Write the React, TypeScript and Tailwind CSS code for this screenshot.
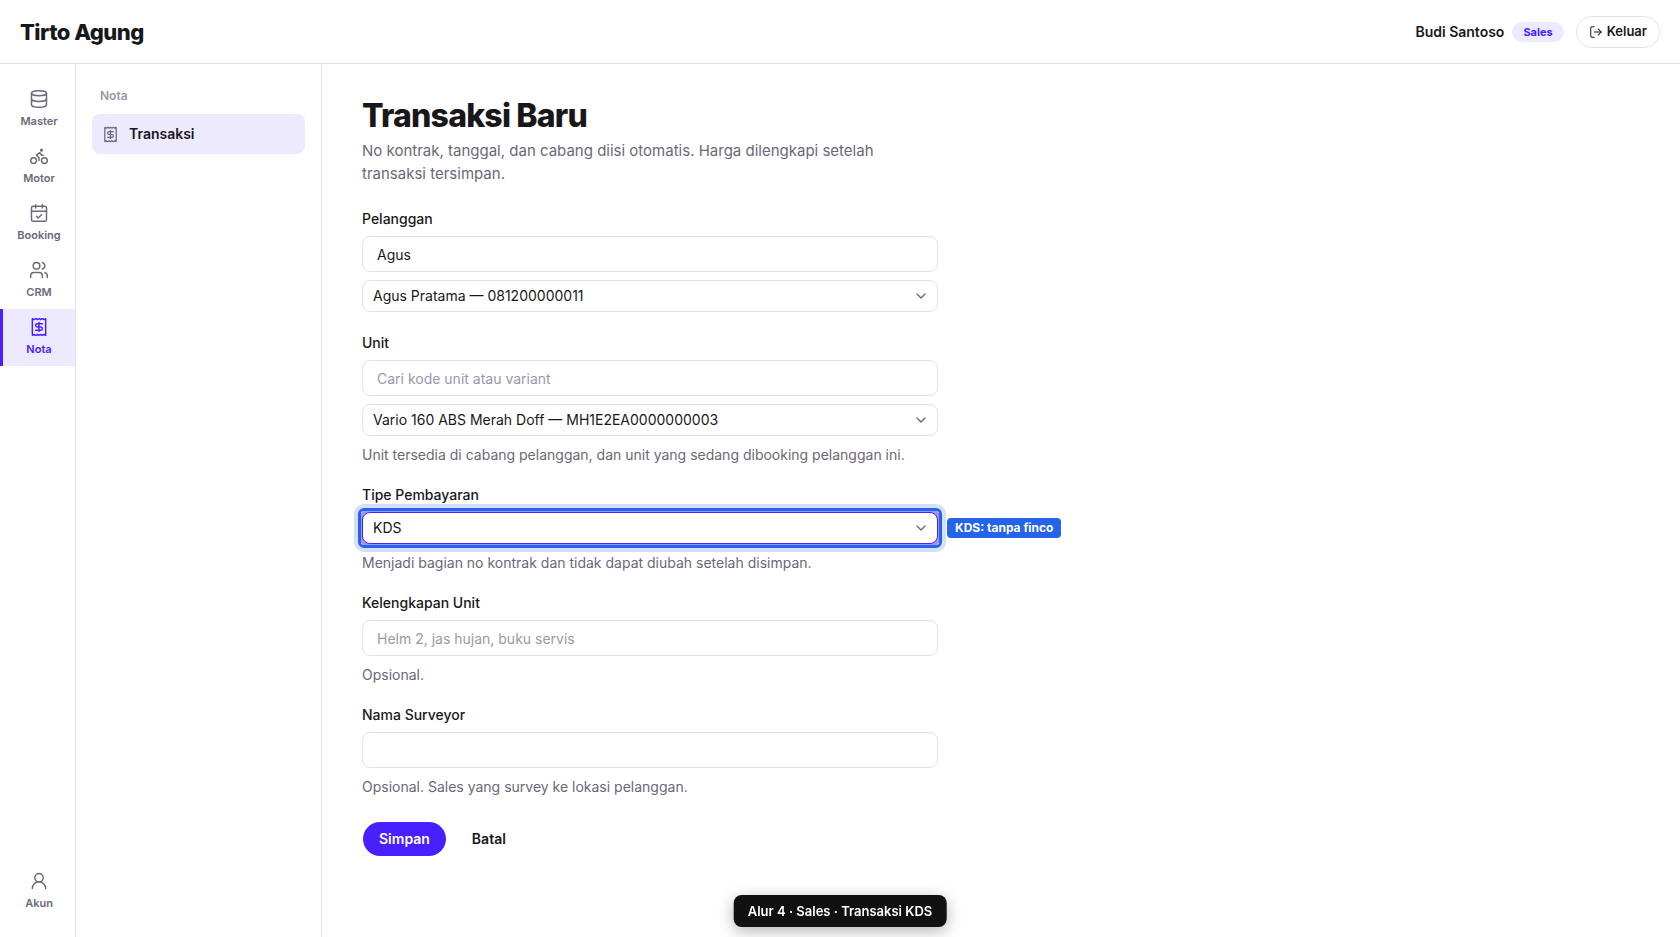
import clsx from "clsx";
import {
  Bike,
  CalendarCheck,
  ChevronDown,
  Database,
  LogOut,
  LucideIcon,
  Receipt,
  UserRound,
  Users,
} from "lucide-react";
import { InputHTMLAttributes, ReactNode, SelectHTMLAttributes } from "react";

interface RailLinkProps {
  label: string;
  icon: LucideIcon;
  active?: boolean;
}

const railItems: RailLinkProps[] = [
  { label: "Master", icon: Database },
  { label: "Motor", icon: Bike },
  { label: "Booking", icon: CalendarCheck },
  { label: "CRM", icon: Users },
  { label: "Nota", icon: Receipt, active: true },
];

function RailLink({ label, icon: Icon, active }: RailLinkProps) {
  return (
    <a
      href="#"
      aria-current={active ? "page" : undefined}
      className={clsx(
        "flex flex-col items-center gap-1 border-l-3 py-2 text-[11px] leading-[17px] font-semibold",
        active
          ? "border-[#4820ff] bg-[#ede9fe] text-[#4820ff]"
          : "border-transparent text-[#6b6878]"
      )}
    >
      <Icon size={20} strokeWidth={1.75} />
      {label}
    </a>
  );
}

function Header() {
  return (
    <header className="flex h-16 shrink-0 items-center justify-between border-b border-[#e4e4e7] px-5">
      <a
        href="#"
        className="text-[22px] leading-7 font-extrabold tracking-tight"
      >
        Tirto Agung
      </a>
      <div className="flex items-center gap-3">
        <div className="flex items-center gap-2">
          <span className="text-sm font-semibold">Budi Santoso</span>
          <span className="rounded-full bg-[#ede9fe] px-[11px] text-[11px] leading-5 font-bold text-[#4820ff]">
            Sales
          </span>
        </div>
        <button
          type="button"
          className="flex h-8 items-center gap-1 rounded-full border border-[#e4e3ea] px-3 text-[13px] font-semibold"
        >
          <LogOut size={14} strokeWidth={1.75} />
          Keluar
        </button>
      </div>
    </header>
  );
}

interface FieldProps {
  id: string;
  label: string;
  hint?: string;
  children: ReactNode;
}

function Field({ id, label, hint, children }: FieldProps) {
  return (
    <div className="flex flex-col gap-2">
      <label htmlFor={id} className="h-5 text-sm leading-[22px] font-medium">
        {label}
      </label>
      {children}
      {hint && (
        <p className="h-5 text-sm leading-[22px] text-[#6b6878]">{hint}</p>
      )}
    </div>
  );
}

function TextInput(props: InputHTMLAttributes<HTMLInputElement>) {
  return (
    <input
      type="text"
      className="h-9 w-full rounded-lg border border-[#e4e3ea] bg-white px-3.5 text-sm outline-none placeholder:text-[#9a98a8]"
      {...props}
    />
  );
}

interface SelectInputProps extends SelectHTMLAttributes<HTMLSelectElement> {
  option: string;
  note?: string;
}

function SelectInput({ option, note, ...props }: SelectInputProps) {
  return (
    <div className="relative">
      <select
        className={clsx(
          "block h-8 w-full appearance-none rounded-lg border bg-white pr-8 pl-2.5 text-sm outline-none",
          note ? "border-[#4820ff] ring-3 ring-[#a48fff]" : "border-[#e4e3ea]"
        )}
        {...props}
      >
        <option>{option}</option>
      </select>
      <ChevronDown
        size={16}
        className="pointer-events-none absolute top-2 right-[9px] text-[#6b6878]"
      />
      {note && (
        <>
          <div className="pointer-events-none absolute -inset-1 rounded-md border-3 border-[#2563eb] ring-4 ring-[#2563eb]/20" />
          <div className="absolute top-1.5 left-full ml-[9px] rounded bg-[#2563eb] px-2 text-xs leading-5 font-bold whitespace-nowrap text-white">
            {note}
          </div>
        </>
      )}
    </div>
  );
}

function TransactionForm() {
  return (
    <form className="mt-[23px] flex flex-col gap-5">
      <Field id="pelanggan" label="Pelanggan">
        <TextInput id="pelanggan" defaultValue="Agus" />
        <SelectInput
          aria-label="Pelanggan"
          option="Agus Pratama — 081200000011"
        />
      </Field>
      <Field
        id="unit"
        label="Unit"
        hint="Unit tersedia di cabang pelanggan, dan unit yang sedang dibooking pelanggan ini."
      >
        <TextInput id="unit" placeholder="Cari kode unit atau variant" />
        <SelectInput
          aria-label="Unit"
          option="Vario 160 ABS Merah Doff — MH1E2EA0000000003"
        />
      </Field>
      <Field
        id="tipe"
        label="Tipe Pembayaran"
        hint="Menjadi bagian no kontrak dan tidak dapat diubah setelah disimpan."
      >
        <SelectInput id="tipe" option="KDS" note="KDS: tanpa finco" />
      </Field>
      <Field id="kelengkapan" label="Kelengkapan Unit" hint="Opsional.">
        <TextInput
          id="kelengkapan"
          placeholder="Helm 2, jas hujan, buku servis"
        />
      </Field>
      <Field
        id="surveyor"
        label="Nama Surveyor"
        hint="Opsional. Sales yang survey ke lokasi pelanggan."
      >
        <TextInput id="surveyor" />
      </Field>
      <div className="flex gap-2 pt-[5px] text-sm font-semibold">
        <button
          type="submit"
          className="h-9 rounded-full border border-transparent bg-[#4820ff] bg-clip-padding px-4 text-white"
        >
          Simpan
        </button>
        <button
          type="button"
          className="h-9 rounded-full border border-transparent px-4"
        >
          Batal
        </button>
      </div>
    </form>
  );
}

export default function App() {
  return (
    <div className="flex min-h-screen flex-col bg-white font-['Inter',sans-serif] text-[#18181b]">
      <Header />
      <div className="flex grow">
        <nav className="flex w-19 shrink-0 flex-col border-r border-[#e4e4e7] py-[17px]">
          {railItems.map((item) => (
            <RailLink key={item.label} {...item} />
          ))}
          <div className="mt-auto">
            <RailLink label="Akun" icon={UserRound} />
          </div>
        </nav>
        <aside className="w-[246px] shrink-0 border-r border-[#e4e4e7] px-4 pt-6">
          <div className="px-2 text-xs leading-4 font-semibold text-[#9a98a8]">
            Nota
          </div>
          <a
            href="#"
            className="mt-2.5 flex h-10 items-center gap-2.5 rounded-lg bg-[#ede9fe] px-2.5 text-sm font-semibold"
          >
            <Receipt size={17} strokeWidth={1.75} className="text-[#6b6878]" />
            Transaksi
          </a>
        </aside>
        <main className="grow px-10 py-8">
          <div className="max-w-xl">
            <h1 className="text-[32px] leading-10 font-extrabold tracking-tight">
              Transaksi Baru
            </h1>
            <p className="mt-[3px] text-[15px] leading-[23px] text-[#6b6878]">
              No kontrak, tanggal, dan cabang diisi otomatis. Harga dilengkapi
              setelah transaksi tersimpan.
            </p>
            <TransactionForm />
          </div>
        </main>
      </div>
      <div className="fixed bottom-2.5 left-1/2 -translate-x-1/2 rounded-lg bg-[#111111] px-3.5 text-[13px] leading-8 font-semibold whitespace-nowrap text-white shadow-[0_4px_16px_rgba(0,0,0,0.3)]">
        Alur 4 · Sales · Transaksi KDS
      </div>
    </div>
  );
}
